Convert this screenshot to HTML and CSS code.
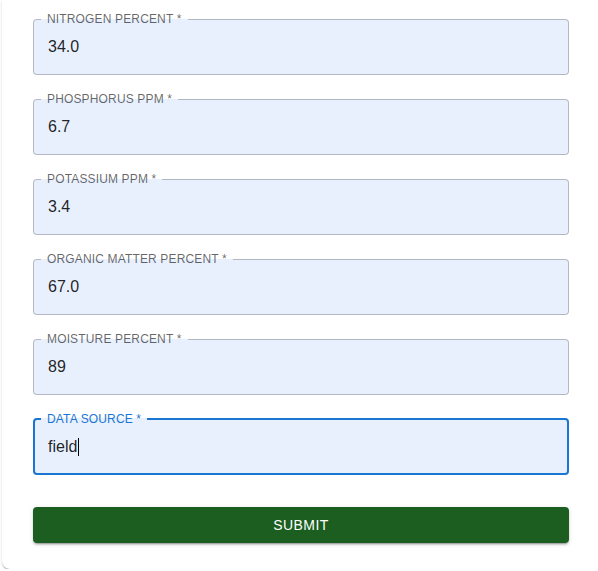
FILE: index.html
```html
<!DOCTYPE html>
<html lang="en">
<head>
<meta charset="utf-8">
<title>Soil data form</title>
<link rel="stylesheet" href="styles.css">
</head>
<body>
<form class="card">
  <fieldset class="field">
    <legend class="label">NITROGEN PERCENT *</legend>
    <input class="input" type="text" value="34.0">
  </fieldset>
  <fieldset class="field">
    <legend class="label">PHOSPHORUS PPM *</legend>
    <input class="input" type="text" value="6.7">
  </fieldset>
  <fieldset class="field">
    <legend class="label">POTASSIUM PPM *</legend>
    <input class="input" type="text" value="3.4">
  </fieldset>
  <fieldset class="field">
    <legend class="label">ORGANIC MATTER PERCENT *</legend>
    <input class="input" type="text" value="67.0">
  </fieldset>
  <fieldset class="field">
    <legend class="label">MOISTURE PERCENT *</legend>
    <input class="input" type="text" value="89">
  </fieldset>
  <fieldset class="field field-focused">
    <legend class="label">DATA SOURCE *</legend>
    <div class="input input-focused"><span>field</span><span class="caret"></span></div>
  </fieldset>
  <button class="submit" type="button">SUBMIT</button>
</form>
</body>
</html>
```

FILE: styles.css
```css
html, body {
  margin: 0;
  padding: 0;
  background: #ffffff;
  overflow: hidden;
}

body {
  font-family: "Liberation Sans", Arial, sans-serif;
}

.card {
  box-sizing: border-box;
  margin-left: 2px;
  width: 596px;
  padding: 13px 29px 26px 31px;
  background: #ffffff;
  border-radius: 0 0 0 8px;
  box-shadow: 0 2px 1px -1px rgba(0,0,0,0.2), 0 1px 1px 0 rgba(0,0,0,0.14), 0 1px 3px 0 rgba(0,0,0,0.12);
  display: flex;
  flex-direction: column;
  gap: 18px;
}

.field {
  margin: 0;
  padding: 0 14px;
  border: 1px solid rgba(0,0,0,0.23);
  border-radius: 4px;
  background: #e8f0fe;
  min-width: 0;
}

.label {
  margin-left: -7px;
  padding: 0 6px;
  font-size: 12px;
  line-height: 12px;
  color: rgba(0,0,0,0.6);
  letter-spacing: 0.15px;
}

.input {
  display: block;
  box-sizing: content-box;
  width: 100%;
  margin: 0;
  padding: 12px 0 18px;
  height: 19px;
  line-height: 19px;
  border: 0;
  outline: none;
  background: transparent;
  font-family: "Liberation Sans", Arial, sans-serif;
  font-size: 16px;
  color: rgba(0,0,0,0.87);
}

.field-focused {
  border: 2px solid #1976d2;
  padding: 0 13px;
}

.field-focused .label {
  color: #1976d2;
}

.input-focused {
  padding: 12px 0 17px;
  display: flex;
  align-items: center;
}

.caret {
  display: inline-block;
  width: 1px;
  height: 18px;
  background: #000;
  margin-left: 1px;
}

.submit {
  margin-top: 14px;
  height: 36px;
  border: 0;
  border-radius: 4px;
  background: #1b5e20;
  color: #ffffff;
  font-family: "Liberation Sans", Arial, sans-serif;
  font-size: 14px;
  letter-spacing: 0.4px;
  box-shadow: 0 3px 1px -2px rgba(0,0,0,0.2), 0 2px 2px 0 rgba(0,0,0,0.14), 0 1px 5px 0 rgba(0,0,0,0.12);
  cursor: pointer;
}
```
